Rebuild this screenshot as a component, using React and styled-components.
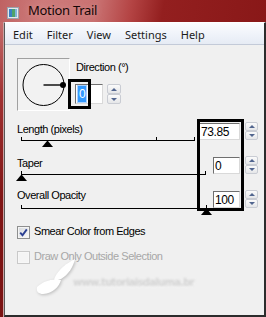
import React from 'react';
import styled, { createGlobalStyle } from 'styled-components';

const Global = createGlobalStyle`
  html, body { margin: 0; padding: 0; background: #f0f0f0; }
  body { font-family: "Liberation Sans", Arial, sans-serif; }
  #root { width: 266px; height: 317px; }
`;

const Window = styled.div`
  width: 266px;
  height: 317px;
  display: flex;
  flex-direction: column;
  overflow: hidden;
  background: #8a1c1c;
`;

const TitleBar = styled.div`
  height: 22px;
  flex: none;
  display: flex;
  align-items: flex-start;
  padding: 1px 0 0 7px;
  box-sizing: border-box;
  gap: 9px;
  background: linear-gradient(100deg, #bf6262 0%, #cd7b7b 16%, #c97272 36%, #b44444 49%, #931f1f 61%, #891818 100%);
`;

const IconWrap = styled.span`
  width: 12px;
  height: 12px;
  margin-top: 4px;
  display: block;
`;

const TitleText = styled.span`
  font-family: "Noto Sans", "Open Sans", sans-serif;
  font-size: 13px;
  letter-spacing: -0.3px;
  color: #140606;
  text-shadow: 0 0 6px rgba(255, 220, 220, 0.35);
`;

const Frame = styled.div`
  flex: 1;
  display: flex;
  min-height: 0;
`;

const LeftEdge = styled.div`
  width: 3px;
  flex: none;
  background: linear-gradient(#c66c6c, #a13232 25%, #801515 60%, #7a1212);
  border-right: 1px solid #c7a3a3;
`;

const Client = styled.div`
  flex: 1;
  display: flex;
  flex-direction: column;
  background: #f0f0f0;
  border-left: 1px solid #575757;
  border-top: 1px solid #ffffff;
  border-right: 2px solid #2c2c2c;
  border-bottom: 2px solid #2c2c2c;
  min-width: 0;
`;

const MenuBar = styled.div`
  height: 20px;
  flex: none;
  display: flex;
  align-items: center;
  padding: 1px 0 0 1px;
  box-sizing: content-box;
  background: linear-gradient(#fbfcfe, #eef2f9 60%, #e6ebf4);
  border-bottom: 1px solid #c3cad8;
`;

const MenuItem = styled.span`
  font-family: "Noto Sans", "Open Sans", sans-serif;
  font-size: 11px;
  line-height: 15px;
  padding: 0 7px;
  color: #1b1b1b;
`;

const Content = styled.div`
  position: relative;
  flex: 1;
  padding: 13px 6px 0 12px;
`;

const DirectionRow = styled.div`
  display: flex;
  align-items: flex-start;
`;

const Dial = styled.div`
  width: 53px;
  height: 53px;
  box-sizing: border-box;
  border: 1px solid;
  border-color: #a0a0a0 #ffffff #ffffff #a0a0a0;
  background: #f2f2f2;
  flex: none;
`;

const DirControls = styled.div`
  display: flex;
  flex-direction: column;
  margin-left: 5px;
  padding-top: 3px;
`;

const Label = styled.div`
  font-size: 11px;
  line-height: 13px;
  height: 13px;
  letter-spacing: -0.45px;
  color: ${p => (p.$disabled ? '#a7a7a7' : '#000')};
  white-space: nowrap;
  padding-left: ${p => p.$indent || 0}px;
  margin-top: ${p => p.$top || 0}px;
`;

const FieldRow = styled.div`
  display: flex;
  gap: 4px;
  margin-top: 10px;
`;

const Field = styled.div`
  width: ${p => p.$w}px;
  height: ${p => p.$h}px;
  margin-top: ${p => p.$top || 0}px;
  box-sizing: border-box;
  background: #ffffff;
  border: 1px solid;
  border-color: #6f6f6f #d9d9d9 #d9d9d9 #6f6f6f;
  display: flex;
  align-items: center;
  padding-left: ${p => p.$pad}px;
  font-size: 12px;
  letter-spacing: -0.4px;
  color: #000;
`;

const Selected = styled.span`
  display: inline-block;
  height: 16px;
  line-height: 16px;
  padding: 0 1px;
  background: #3399ff;
  color: #ffffff;
  outline: 1px solid #a9d1ff;
`;

const SpinBox = styled.div`
  width: ${p => p.$w}px;
  height: ${p => p.$h}px;
  display: flex;
  flex-direction: column;
  flex: none;
`;

const SpinHalf = styled.div`
  flex: 1;
  box-sizing: border-box;
  border: 1px solid #c9ccd3;
  border-radius: 2px;
  background: linear-gradient(#fbfbfb, #e5e6e8);
  display: flex;
  align-items: center;
  justify-content: center;
  &::after {
    content: '';
    width: 0;
    height: 0;
    border-left: 3px solid transparent;
    border-right: 3px solid transparent;
    ${p => (p.$up ? 'border-bottom' : 'border-top')}: 3px solid #52668f;
  }
`;

const Sliders = styled.div`
  margin-top: 11px;
  display: flex;
  flex-direction: column;
`;

const SliderRow = styled.div`
  height: 34px;
  display: grid;
  grid-template-columns: minmax(0, 1fr) auto auto;
  column-gap: 5px;
  align-items: start;
`;

const SliderMain = styled.div`
  display: flex;
  flex-direction: column;
  min-width: 0;
`;

const Track = styled.div`
  position: relative;
  margin-left: 4px;
  margin-top: ${p => p.$top || 0}px;
  width: ${p => p.$w}px;
  height: 3px;
  border-bottom: 1px solid #000;
  &::before,
  &::after {
    content: '';
    position: absolute;
    bottom: 0;
    width: 1px;
    height: 3px;
    background: #000;
  }
  &::before { left: 0; }
  &::after { right: 0; }
`;

const Tick = styled.span`
  position: absolute;
  bottom: 0;
  left: ${p => p.$at}px;
  width: 1px;
  height: 3px;
  background: #000;
`;

const Thumb = styled.span`
  position: absolute;
  top: calc(100% + 1px);
  width: 1px;
  height: 0;
  border-left: 5px solid transparent;
  border-right: 5px solid transparent;
  border-bottom: 6px solid #000;
  z-index: 2;
`;

const Checks = styled.div`
  display: flex;
  flex-direction: column;
`;

const CheckRow = styled.div`
  height: 25px;
  display: flex;
  align-items: flex-start;
  gap: 4px;
`;

const Box = styled.span`
  width: 13px;
  height: 13px;
  margin-top: 2px;
  box-sizing: border-box;
  border: 1px solid ${p => (p.$disabled ? '#c9c9c9' : '#8e8f8f')};
  background: ${p => (p.$disabled ? '#f4f4f4' : 'linear-gradient(135deg, #d5d8dc, #fbfbfb)')};
  box-shadow: inset 0 0 0 1px ${p => (p.$disabled ? '#f7f7f7' : '#f4f4f4')};
  display: flex;
  align-items: center;
  justify-content: center;
  flex: none;
`;

const Highlight = styled.div`
  position: absolute;
  left: ${p => p.$x}px;
  top: ${p => p.$y}px;
  width: ${p => p.$w}px;
  height: ${p => p.$h}px;
  box-sizing: border-box;
  border: 3px solid #000;
  pointer-events: none;
  z-index: 1;
`;

const Watermark = styled.div`
  position: absolute;
  left: 28px;
  top: 212px;
  display: flex;
  align-items: flex-end;
  pointer-events: none;
`;

const WatermarkText = styled.span`
  font-family: "DejaVu Sans", sans-serif;
  font-size: 10px;
  font-weight: bold;
  letter-spacing: -0.7px;
  color: rgba(150, 150, 150, 0.42);
  filter: blur(0.9px);
  margin: 0 0 9px -4px;
  text-shadow: 0 1px 1px rgba(255, 255, 255, 0.9);
  white-space: nowrap;
`;

function Spin({ w, h }) {
  return (
    <SpinBox $w={w} $h={h}>
      <SpinHalf $up />
      <SpinHalf />
    </SpinBox>
  );
}

const sliders = [
  { label: 'Length (pixels)', value: '73.85', track: 174, thumb: 26, ticks: [135], field: 41, shift: 0 },
  { label: 'Taper', value: '0', track: 185, thumb: 0, ticks: [], field: 27, shift: 0 },
  { label: 'Overall Opacity', value: '100', track: 186, thumb: 185, ticks: [], field: 27, shift: 2 },
];

export default function App() {
  return (
    <>
      <Global />
      <Window>
        <TitleBar>
          <IconWrap>
            <svg width="12" height="12" viewBox="0 0 12 12">
              <rect x="0.5" y="0.5" width="11" height="11" fill="#e4e7ec" stroke="#9aa3ad" />
              <rect x="2" y="2" width="3" height="8" fill="#3a7fc4" />
              <rect x="5" y="2" width="3" height="8" fill="#4fa36a" />
              <rect x="8" y="2" width="2" height="8" fill="#7fb3d9" />
            </svg>
          </IconWrap>
          <TitleText>Motion Trail</TitleText>
        </TitleBar>
        <Frame>
          <LeftEdge />
          <Client>
            <MenuBar>
              {['Edit', 'Filter', 'View', 'Settings', 'Help'].map(m => (
                <MenuItem key={m}>{m}</MenuItem>
              ))}
            </MenuBar>
            <Content>
              <DirectionRow>
                <Dial>
                  <svg width="51" height="51" viewBox="0 0 51 51">
                    <circle cx="25.5" cy="26" r="20.5" fill="none" stroke="#000" strokeWidth="1" />
                    <line x1="25.5" y1="26" x2="44" y2="26" stroke="#4a4a4a" strokeWidth="2" />
                    <circle cx="45" cy="26" r="3" fill="#000" />
                  </svg>
                </Dial>
                <DirControls>
                  <Label $indent={1}>Direction (°)</Label>
                  <FieldRow>
                    <Field $w={28} $h={20} $pad={2}>
                      <Selected>0</Selected>
                    </Field>
                    <Spin w={14} h={20} />
                  </FieldRow>
                </DirControls>
              </DirectionRow>

              <Sliders>
                {sliders.map(s => (
                  <SliderRow key={s.label}>
                    <SliderMain>
                      <Label $top={1 - s.shift}>{s.label}</Label>
                      <Track $w={s.track} $top={1 + s.shift}>
                        {s.ticks.map(t => (
                          <Tick key={t} $at={t} />
                        ))}
                        <Thumb style={{ left: s.thumb - 5 }} />
                      </Track>
                    </SliderMain>
                    <Field $w={s.field} $h={17} $top={1} $pad={1}>
                      {s.value}
                    </Field>
                    <Spin w={13} h={18} />
                  </SliderRow>
                ))}
              </Sliders>

              <Checks>
                <CheckRow>
                  <Box>
                    <svg width="9" height="9" viewBox="0 0 9 9">
                      <path d="M1.2 4.6 L3.5 7.2 L7.8 1.4" fill="none" stroke="#2a3f92" strokeWidth="1.9" />
                    </svg>
                  </Box>
                  <Label $top={1}>Smear Color from Edges</Label>
                </CheckRow>
                <CheckRow>
                  <Box $disabled />
                  <Label $top={1} $disabled>Draw Only Outside Selection</Label>
                </CheckRow>
              </Checks>

              <Highlight $x={63} $y={34} $w={23} $h={30} />
              <Highlight $x={192} $y={74} $w={47} $h={92} />

              <Watermark>
                <svg width="44" height="40" viewBox="0 0 44 40" style={{ filter: 'drop-shadow(1px 1px 1.5px rgba(0,0,0,0.22))' }}>
                  <path d="M22 20 C26 12 34 6 42 2 C40 10 36 17 28 22 C22 24 20 24 22 20 Z" fill="#ffffff" />
                  <path d="M4 30 C10 24 20 21 28 23 C26 30 20 36 10 37 C6 37 3 35 4 30 Z" fill="#ffffff" />
                </svg>
                <WatermarkText>www.tutoriaisdaluma.br</WatermarkText>
              </Watermark>
            </Content>
          </Client>
        </Frame>
      </Window>
    </>
  );
}
